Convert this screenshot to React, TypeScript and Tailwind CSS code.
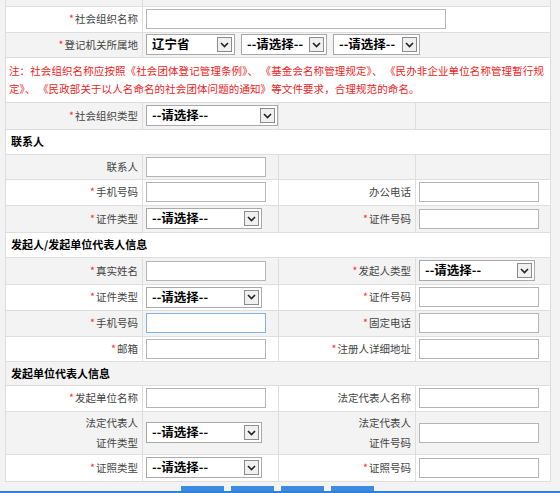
import React from 'react';

const font = { fontFamily: '"Noto Sans CJK SC", "Noto Sans", sans-serif' };

const Star = () => <span className="text-[#ff3030] mr-[1px]">*</span>;

const Field = ({ focus = false, wide = false }: { focus?: boolean; wide?: boolean }) => (
  <input
    readOnly
    className={`block h-[20px] bg-white outline-none border ${wide ? 'w-[300px]' : 'w-[120px]'} ${
      focus ? 'border-[#7eb4ea]' : 'border-[#b5b5b5]'
    }`}
  />
);

const Select = ({ text = '--请选择--', w = 'w-[116px]' }: { text?: string; w?: string }) => (
  <div className={`${w} h-[21px] flex items-center justify-between border border-[#a9a9a9] bg-white pl-[5px] pr-[2px]`}>
    <span className="text-[12.5px] font-bold text-black leading-none whitespace-nowrap">{text}</span>
    <span className="w-[15px] h-[15px] border border-[#8c8c8c] bg-[#f0f0f0] flex items-center justify-center">
      <svg width="9" height="6" viewBox="0 0 9 6">
        <path d="M1 1 L4.5 4.5 L8 1" fill="none" stroke="#222" strokeWidth="1.6" />
      </svg>
    </span>
  </div>
);

const Label = ({ req, children }: { req?: boolean; children: React.ReactNode }) => (
  <td className="border border-[#dedede] pr-[4px] text-right align-middle text-[10.5px] text-[#444] leading-[20px]">
    {req && <Star />}
    {children}
  </td>
);

const Cell = ({ children, span }: { children?: React.ReactNode; span?: number }) => (
  <td colSpan={span} className="border border-[#dedede] pl-[3px] align-middle">
    {children}
  </td>
);

const Section = ({ title, gray, h }: { title: string; gray?: boolean; h: string }) => (
  <tr className={`${h} ${gray ? 'bg-[#f3f3f3]' : 'bg-white'}`}>
    <td colSpan={4} className="border border-[#dedede] pl-[5px] text-[11px] font-bold text-black">
      {title}
    </td>
  </tr>
);

export default function App() {
  return (
    <div style={font} className="h-[493px] box-border overflow-hidden bg-[#f3f3f3] border-b-2 border-[#2f80d6]">
      <div className="pl-[5px] pr-[10px]">
        <table className="table-fixed border-collapse w-[545px]">
          <colgroup>
            <col className="w-[137px]" />
            <col className="w-[136px]" />
            <col className="w-[137px]" />
            <col className="w-[135px]" />
          </colgroup>
          <tbody>
            <tr className="h-[6px] bg-[#f3f3f3]">
              <td className="border border-[#dedede] border-t-0" />
              <td colSpan={3} className="border border-[#dedede] border-t-0" />
            </tr>
            <tr className="h-[26px] bg-white">
              <Label req>社会组织名称</Label>
              <Cell span={3}>
                <Field wide />
              </Cell>
            </tr>
            <tr className="h-[25px] bg-[#f3f3f3]">
              <Label req>登记机关所属地</Label>
              <Cell span={3}>
                <div className="flex gap-[6px]">
                  <Select text="辽宁省" w="w-[89px]" />
                  <Select w="w-[86px]" />
                  <Select w="w-[87px]" />
                </div>
              </Cell>
            </tr>
            <tr className="bg-white">
              <td colSpan={4} className="border border-[#dedede] pl-[3px] py-[4px] text-[10.5px] tracking-[0.1px] leading-[18px] text-[#ee1c1c] whitespace-nowrap">
                注：社会组织名称应按照《社会团体登记管理条例》、 《基金会名称管理规定》、 《民办非企业单位名称管理暂行规
                <br />
                定》、 《民政部关于以人名命名的社会团体问题的通知》等文件要求，合理规范的命名。
              </td>
            </tr>
            <tr className="h-[27px] bg-[#f3f3f3]">
              <Label req>社会组织类型</Label>
              <Cell>
                <Select w="w-[132px]" />
              </Cell>
              <Cell />
              <Cell />
            </tr>

            <Section title="联系人" h="h-[25px]" />
            <tr className="h-[25px] bg-[#f3f3f3]">
              <Label>联系人</Label>
              <Cell>
                <Field />
              </Cell>
              <Cell />
              <Cell />
            </tr>
            <tr className="h-[26px] bg-white">
              <Label req>手机号码</Label>
              <Cell>
                <Field />
              </Cell>
              <Label>办公电话</Label>
              <Cell>
                <Field />
              </Cell>
            </tr>
            <tr className="h-[27px] bg-[#f3f3f3]">
              <Label req>证件类型</Label>
              <Cell>
                <Select />
              </Cell>
              <Label req>证件号码</Label>
              <Cell>
                <Field />
              </Cell>
            </tr>

            <Section title="发起人/发起单位代表人信息" h="h-[25px]" />
            <tr className="h-[27px] bg-[#f3f3f3]">
              <Label req>真实姓名</Label>
              <Cell>
                <Field />
              </Cell>
              <Label req>发起人类型</Label>
              <Cell>
                <Select />
              </Cell>
            </tr>
            <tr className="h-[26px] bg-white">
              <Label req>证件类型</Label>
              <Cell>
                <Select />
              </Cell>
              <Label req>证件号码</Label>
              <Cell>
                <Field />
              </Cell>
            </tr>
            <tr className="h-[26px] bg-[#f3f3f3]">
              <Label req>手机号码</Label>
              <Cell>
                <Field focus />
              </Cell>
              <Label req>固定电话</Label>
              <Cell>
                <Field />
              </Cell>
            </tr>
            <tr className="h-[25px] bg-white">
              <Label req>邮箱</Label>
              <Cell>
                <Field />
              </Cell>
              <Label req>注册人详细地址</Label>
              <Cell>
                <Field />
              </Cell>
            </tr>

            <Section title="发起单位代表人信息" gray h="h-[24px]" />
            <tr className="h-[26px] bg-white">
              <Label req>发起单位名称</Label>
              <Cell>
                <Field />
              </Cell>
              <Label>法定代表人名称</Label>
              <Cell>
                <Field />
              </Cell>
            </tr>
            <tr className="h-[43px] bg-[#f3f3f3]">
              <Label>
                法定代表人
                <br />
                证件类型
              </Label>
              <Cell>
                <Select />
              </Cell>
              <Label>
                法定代表人
                <br />
                证件号码
              </Label>
              <Cell>
                <Field />
              </Cell>
            </tr>
            <tr className="h-[27px] bg-white">
              <Label req>证照类型</Label>
              <Cell>
                <Select />
              </Cell>
              <Label req>证照号码</Label>
              <Cell>
                <Field />
              </Cell>
            </tr>
          </tbody>
        </table>

        <div className="w-[545px] flex justify-center gap-[7px] pt-[4px]">
          {['暂存', '提交', '返回', '退出'].map((t) => (
            <button key={t} className="w-[43px] h-[26px] bg-[#3b8be0] text-white text-[12px] leading-[26px]">
              {t}
            </button>
          ))}
        </div>
      </div>
    </div>
  );
}
